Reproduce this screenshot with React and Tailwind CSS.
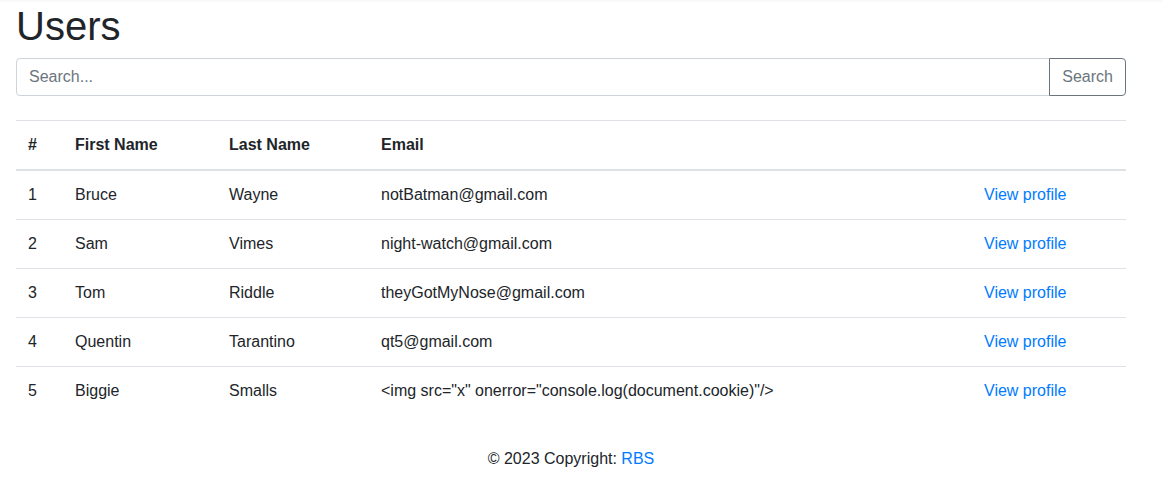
import React from 'react';

const users = [
  { id: 1, first: 'Bruce', last: 'Wayne', email: 'notBatman@gmail.com' },
  { id: 2, first: 'Sam', last: 'Vimes', email: 'night-watch@gmail.com' },
  { id: 3, first: 'Tom', last: 'Riddle', email: 'theyGotMyNose@gmail.com' },
  { id: 4, first: 'Quentin', last: 'Tarantino', email: 'qt5@gmail.com' },
  { id: 5, first: 'Biggie', last: 'Smalls', email: '<img src="x" onerror="console.log(document.cookie)"/>' },
];

export default function App() {
  return (
    <div className="min-h-screen bg-white text-[#212529] text-[16px] leading-6 font-['Liberation_Sans',Arial,sans-serif]">
      {/* Navbar edge */}
      <div className="h-[2px] bg-[#f8f9fa]" />

      <main className="ml-4 w-[1110px]">
        <h1 className="text-[40px] leading-[48px] font-medium mb-2">Users</h1>

        {/* Search */}
        <div className="flex h-[38px] mb-6">
          <input
            type="text"
            placeholder="Search..."
            className="flex-1 px-3 border border-[#ced4da] rounded-l-[4px] outline-none placeholder:text-[#6c757d]"
          />
          <button className="-ml-px px-3 border border-[#6c757d] rounded-r-[4px] text-[#6c757d]">
            Search
          </button>
        </div>

        {/* Table */}
        <table className="w-full border-collapse mb-4 table-fixed">
          <colgroup>
            <col className="w-[47px]" />
            <col className="w-[154px]" />
            <col className="w-[152px]" />
            <col className="w-[603px]" />
            <col />
          </colgroup>
          <thead>
            <tr className="border-t border-[#dee2e6]">
              <th className="text-left font-bold p-3 border-b-2 border-[#dee2e6]">#</th>
              <th className="text-left font-bold p-3 border-b-2 border-[#dee2e6]">First Name</th>
              <th className="text-left font-bold p-3 border-b-2 border-[#dee2e6]">Last Name</th>
              <th className="text-left font-bold p-3 border-b-2 border-[#dee2e6]">Email</th>
              <th className="p-3 border-b-2 border-[#dee2e6]"></th>
            </tr>
          </thead>
          <tbody>
            {users.map((u, i) => (
              <tr key={u.id} className={i > 0 ? 'border-t border-[#dee2e6]' : ''}>
                <td className="p-3">{u.id}</td>
                <td className="p-3">{u.first}</td>
                <td className="p-3">{u.last}</td>
                <td className="p-3 whitespace-nowrap">{u.email}</td>
                <td className="p-3">
                  <a href="#" className="text-[#007bff]">View profile</a>
                </td>
              </tr>
            ))}
          </tbody>
        </table>

        {/* Footer */}
        <footer className="p-4 text-center">
          © 2023 Copyright: <a href="#" className="text-[#007bff]">RBS</a>
        </footer>
      </main>
    </div>
  );
}
